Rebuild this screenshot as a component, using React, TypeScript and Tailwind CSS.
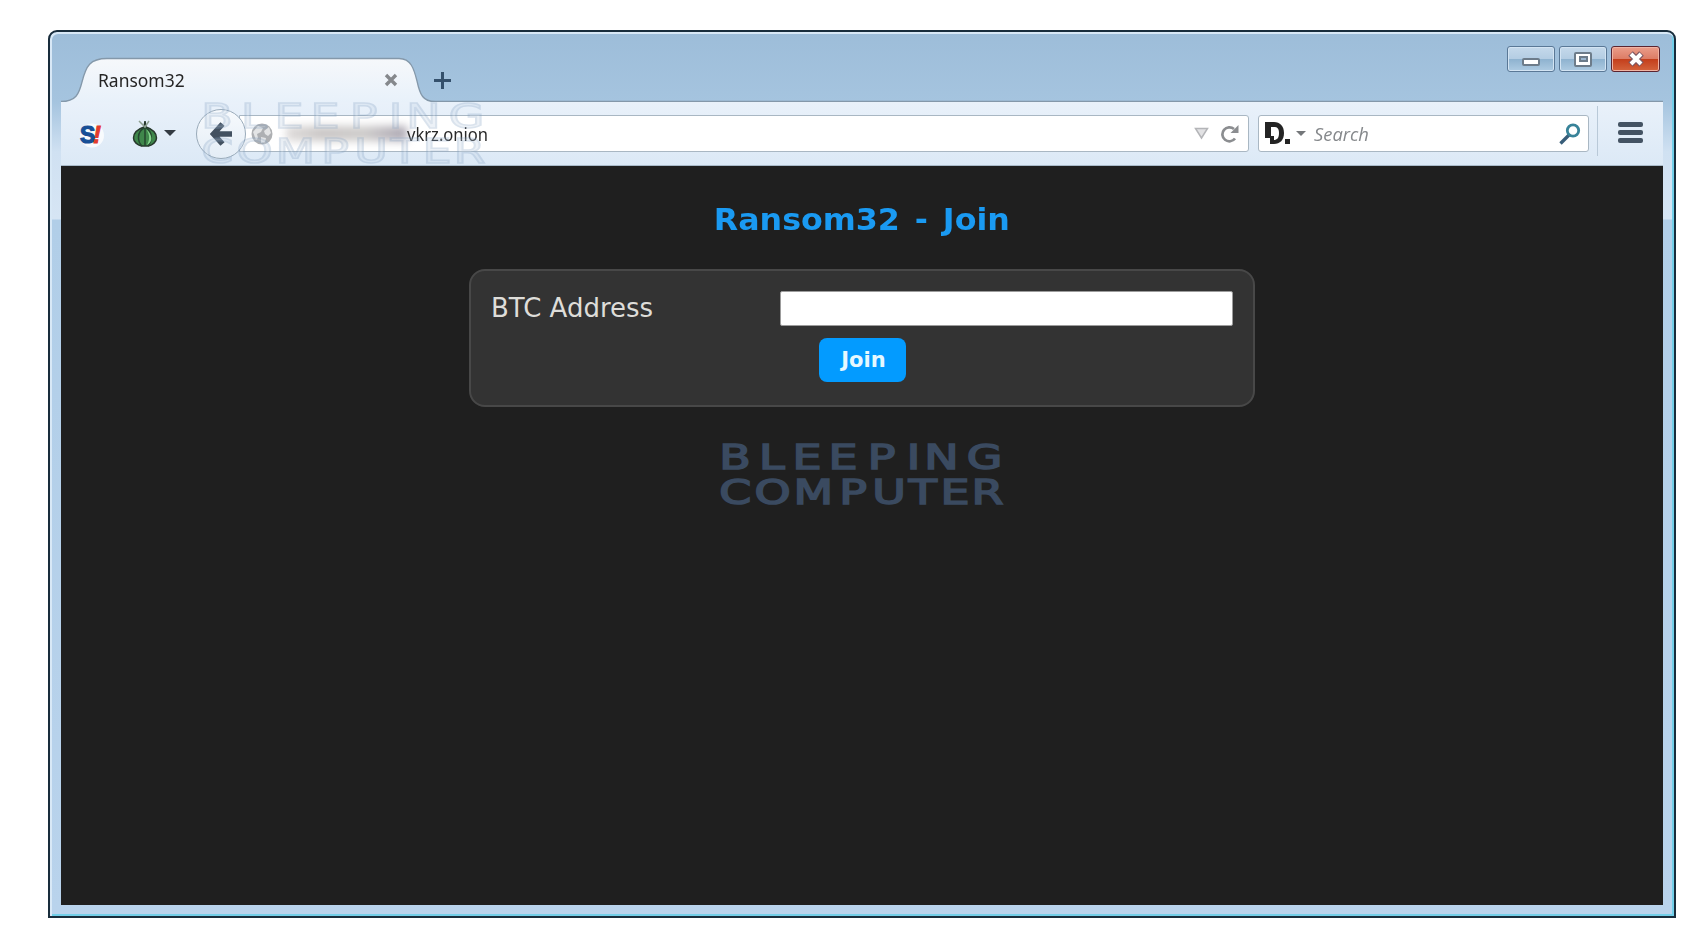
import React from "react";

function Watermark({ className, fill, stroke }: { className: string; fill: string; stroke: string }) {
  return (
    <svg className={className} width="286" height="66" viewBox="0 0 286 66" aria-hidden="true">
      <g transform="translate(1.5 0) scale(1.35 1)" fontFamily="DejaVu Sans" fontSize="34" fill={fill} stroke={stroke} strokeWidth="1.6">
        <text x="-1 28.6 53.3 80 109 138 151 182.5" y="29">BLEEPING</text>
        <text x="-1 25.2 54 88 112.5 139.5 163 186" y="64">COMPUTER</text>
      </g>
    </svg>
  );
}

function WindowButtons() {
  const glass =
    "flex h-[26px] w-[48px] items-center justify-center rounded-[3px] border border-[#5a7896] shadow-[inset_0_0_0_1px_#d3e4f3] bg-[linear-gradient(#c5d9eb_0%,#b4cde3_48%,#8fb3d0_52%,#aecbe2_100%)]";
  return (
    <div className="mt-[14px] mr-[3px] flex gap-[4px]">
      <div className={glass}>
        <div className="mt-[6px] h-[8px] w-[18px] rounded-[2px] border-2 border-[#6d7c8a] bg-white" />
      </div>
      <div className={glass}>
        <div className="flex h-[15px] w-[18px] items-center justify-center rounded-[2px] border-2 border-[#6d7c8a] bg-white">
          <div className="h-[6px] w-[9px] border-2 border-[#6d7c8a] bg-[#9bb6cf]" />
        </div>
      </div>
      <div className="flex h-[26px] w-[49px] items-center justify-center rounded-[3px] border border-[#5b2430] bg-[linear-gradient(#eb9d8a_0%,#dd7d66_48%,#c43f1c_52%,#d4643d_100%)] shadow-[inset_0_0_0_1px_#f0b4a4]">
        <svg width="18" height="16" viewBox="0 0 18 16">
          <path d="M3.500 2.500l11 11M14.500 2.500l-11 11" stroke="#7d5660" strokeWidth="6.500" />
          <path d="M4 3l10 10M14 3L4 13" stroke="#fff" strokeWidth="4" />
        </svg>
      </div>
    </div>
  );
}

function TabStrip() {
  return (
    <div className="relative flex h-[70px] justify-between">
      <svg className="absolute left-0 top-0" width="1602" height="71" viewBox="0 0 1602 71">
        <defs>
          <linearGradient id="tab" x1="0" y1="0" x2="0" y2="1">
            <stop offset="0" stopColor="#f6f8fb" />
            <stop offset="1" stopColor="#e8f1fa" />
          </linearGradient>
        </defs>
        <path d="M0 69.500C15 69.500 18 62 21 50C25 34 29 26.500 46 26.500H338C350 26.500 353 37 356 49C359 63 362 69.500 374 69.500V71H0Z" fill="url(#tab)" />
        <path d="M0 69.500C15 69.500 18 62 21 50C25 34 29 26.500 46 26.500H338C350 26.500 353 37 356 49C359 63 362 69.500 374 69.500H1602" fill="none" stroke="#8498aa" strokeWidth="1.300" />
      </svg>
      <div className="relative flex pt-[26px]">
        <div className="flex h-[44px] w-[337px] items-center justify-between pl-[37px]">
          <span className="origin-left scale-x-[0.97] font-['Noto_Sans'] text-[18px] leading-[44px] text-[#252525]">Ransom32</span>
          <svg width="14" height="14" viewBox="0 0 14 14">
            <path d="M2 2l10 10M12 2L2 12" stroke="#85888c" strokeWidth="3.400" />
          </svg>
        </div>
        <svg className="mt-[14px] ml-[36px]" width="17" height="17" viewBox="0 0 17 17">
          <path d="M8.500 0v17M0 8.500h17" stroke="#34506c" strokeWidth="3" />
        </svg>
      </div>
      <WindowButtons />
    </div>
  );
}

function Toolbar() {
  return (
    <div className="relative flex h-[64px] items-start border-b border-[#a9bac9] bg-[linear-gradient(#e9f1fa,#dce9f6)]">
      <svg className="mt-[20px] ml-[18px]" width="26" height="27" viewBox="0 0 26 27">
        <circle cx="13" cy="13.500" r="12" fill="#fff" opacity=".75" />
        <text x="1" y="21" fontFamily="Liberation Sans" fontSize="23" fontWeight="700" fill="#174f96" stroke="#174f96" strokeWidth="1.200">S</text>
        <text x="14" y="21" fontFamily="Liberation Sans" fontSize="24" fontWeight="700" fontStyle="italic" fill="#e33b2d" stroke="#e33b2d">!</text>
      </svg>
      <svg className="mt-[18px] ml-[27px]" width="26" height="28" viewBox="0 0 26 28">
        <path d="M13 1l-1 6C6 9 1.500 13 1.500 18c0 4 4 7 8 8h7c4-1 8-4 8-8 0-5-4.500-9-10.500-11z" fill="#3f874b" stroke="#27382c" strokeWidth="1.500" />
        <path d="M12 8C5 12 5 21 10 26M13 8v18M14 8c7 4 6 13 2 18" fill="none" stroke="#24462e" strokeWidth="1.500" />
        <path d="M14 9c4 5 4 11 1 16 6-3 6-10-1-16z" fill="#85d58c" />
        <path d="M7 1l6 6 4-6" fill="none" stroke="#8fa193" strokeWidth="1.500" />
      </svg>
      <div className="mt-[28px] ml-[6px] h-0 w-0 border-x-[6px] border-t-[6px] border-x-transparent border-t-[#333b43]" />
      <div className="z-10 mt-[7px] ml-[20px] flex h-[50px] w-[50px] items-center justify-center rounded-full border border-[#9aabba] bg-[linear-gradient(#f7fafd,#e4edf6)]">
        <svg width="22" height="24" viewBox="0 0 22 24">
          <path d="M12.500 2L3.500 12l9 10M4 12h18" fill="none" stroke="#435160" strokeWidth="5.500" />
        </svg>
      </div>
      <div className="mt-[13px] -ml-[7px] flex h-[37px] w-[1010px] items-center rounded-r-[3px] border border-[#a9b7c3] bg-white pl-[11px]">
        <svg width="22" height="22" viewBox="0 0 22 22">
          <circle cx="11" cy="11" r="10.500" fill="#aeb0b3" />
          <path d="M2 9l5-6 5 2-2 4-4 2 1 4-2 2zM13 8l5-4 2 6-3 3-3-2zM10 14l5 1-1 4-4 1z" fill="#e3e4e5" />
        </svg>
        <div className="ml-[13px] flex h-[19px] w-[121px] items-center blur-[4px]">
          <div className="h-[15px] w-full bg-[linear-gradient(90deg,#dedbda,#c9c6c5_30%,#cdcbca_65%,#aaa5b1)]" />
        </div>
        <span className="mt-[2px] w-[90px] origin-left scale-x-[0.92] font-['Noto_Sans'] text-[18px] whitespace-nowrap text-[#282828]">vkrz.onion</span>
        <div className="flex-1" />
        <svg className="mr-[12px]" width="15" height="13" viewBox="0 0 15 13">
          <path d="M1.500 1.500h12L7.500 11z" fill="#e2e2e4" stroke="#b4b5b8" strokeWidth="1.500" />
        </svg>
        <svg className="mr-[9px]" width="18" height="18" viewBox="0 0 18 18">
          <path d="M14 13.500A7 7 0 1 1 13 4" fill="none" stroke="#8b8d90" strokeWidth="2.700" />
          <path d="M17.500 0v8H9.500z" fill="#8b8d90" />
        </svg>
      </div>
      <div className="mt-[13px] ml-[9px] flex h-[37px] w-[331px] items-center rounded-[3px] border border-[#a9b7c3] bg-white pl-[6px]">
        <svg width="26" height="23" viewBox="0 0 26 23">
          <path fillRule="evenodd" d="M0 0h9c6 0 10 4 10 11s-4 11-10 11H5v-6H0zM6 5v9h3v4c3 0 5-2 5-7s-2-6-5-6z" fill="#242424" />
          <path d="M20 17h5v5h-5z" fill="#242424" />
        </svg>
        <div className="ml-[5px] h-0 w-0 border-x-[5px] border-t-[5px] border-x-transparent border-t-[#74777a]" />
        <span className="mt-[2px] ml-[8px] origin-left scale-x-[1.02] font-['Open_Sans'] text-[18px] text-[#85888b] italic">Search</span>
        <div className="flex-1" />
        <svg className="mr-[7px]" width="22" height="22" viewBox="0 0 22 22">
          <path d="M10 12L1.500 20.500" stroke="#385d79" strokeWidth="3.300" />
          <circle cx="14" cy="7.500" r="5.700" fill="none" stroke="#388399" strokeWidth="2.800" />
        </svg>
      </div>
      <div className="mt-[4px] ml-[8px] h-[50px] w-px bg-[#b9c9d8]" />
      <div className="mt-[20px] ml-[20px] flex w-[25px] flex-col gap-[3px]">
        <div className="h-[5px] rounded-[2px] bg-[#445363]" />
        <div className="h-[5px] rounded-[2px] bg-[#445363]" />
        <div className="h-[5px] rounded-[2px] bg-[#445363]" />
      </div>
    </div>
  );
}

function JoinPage() {
  return (
    <main className="flex h-[739px] flex-col items-center bg-[#1f1f1f] font-['DejaVu_Sans']">
      <h1 className="mt-[32px] h-[71px] origin-center scale-x-[1.022] text-[31px] leading-[42px] font-bold [word-spacing:3.8px] whitespace-nowrap text-[#1a9af2]">Ransom32 - Join</h1>
      <form className="flex h-[138px] w-[786px] flex-col rounded-[16px] border-2 border-[#484848] bg-[#333333] px-[20px] pt-[20px]">
        <div className="flex h-[35px] items-center justify-between">
          <label className="text-[26px] text-[#deddd9]">BTC Address</label>
          <input className="h-[35px] w-[453px] rounded-[2px] border border-[#9c9c9c] bg-white" />
        </div>
        <button type="button" className="mt-[12px] h-[44px] w-[87px] self-center rounded-[8px] bg-[#039bff] pt-[2px] pl-[3px] text-[21px] font-bold text-[#e6f8ff]">Join</button>
      </form>
      <Watermark className="mt-[33px] overflow-visible" fill="#3a4a60" stroke="#3a4a60" />
    </main>
  );
}

export default function App() {
  return (
    <div className="h-[926px] w-[1702px] overflow-hidden bg-white pt-[30px] pl-[48px]">
      <div className="relative h-[888px] w-[1628px] rounded-t-[9px] border-2 border-[#192d3c] bg-[linear-gradient(#9dbdd9_0px,#a5c4df_70px,#d0e1f2_120px,#d6e5f4_187px,#b1cee8_188px,#b9d3ec_100%)] px-[11px] shadow-[inset_1px_1px_0_1px_#d8e8f6,inset_-2px_-2px_0_#72cfe9]">
        <TabStrip />
        <Toolbar />
        <JoinPage />
        <Watermark className="absolute top-[67px] left-[151px] z-20 overflow-visible opacity-30 blur-[0.6px]" fill="#c3d4e6" stroke="#88a4c4" />
      </div>
    </div>
  );
}
